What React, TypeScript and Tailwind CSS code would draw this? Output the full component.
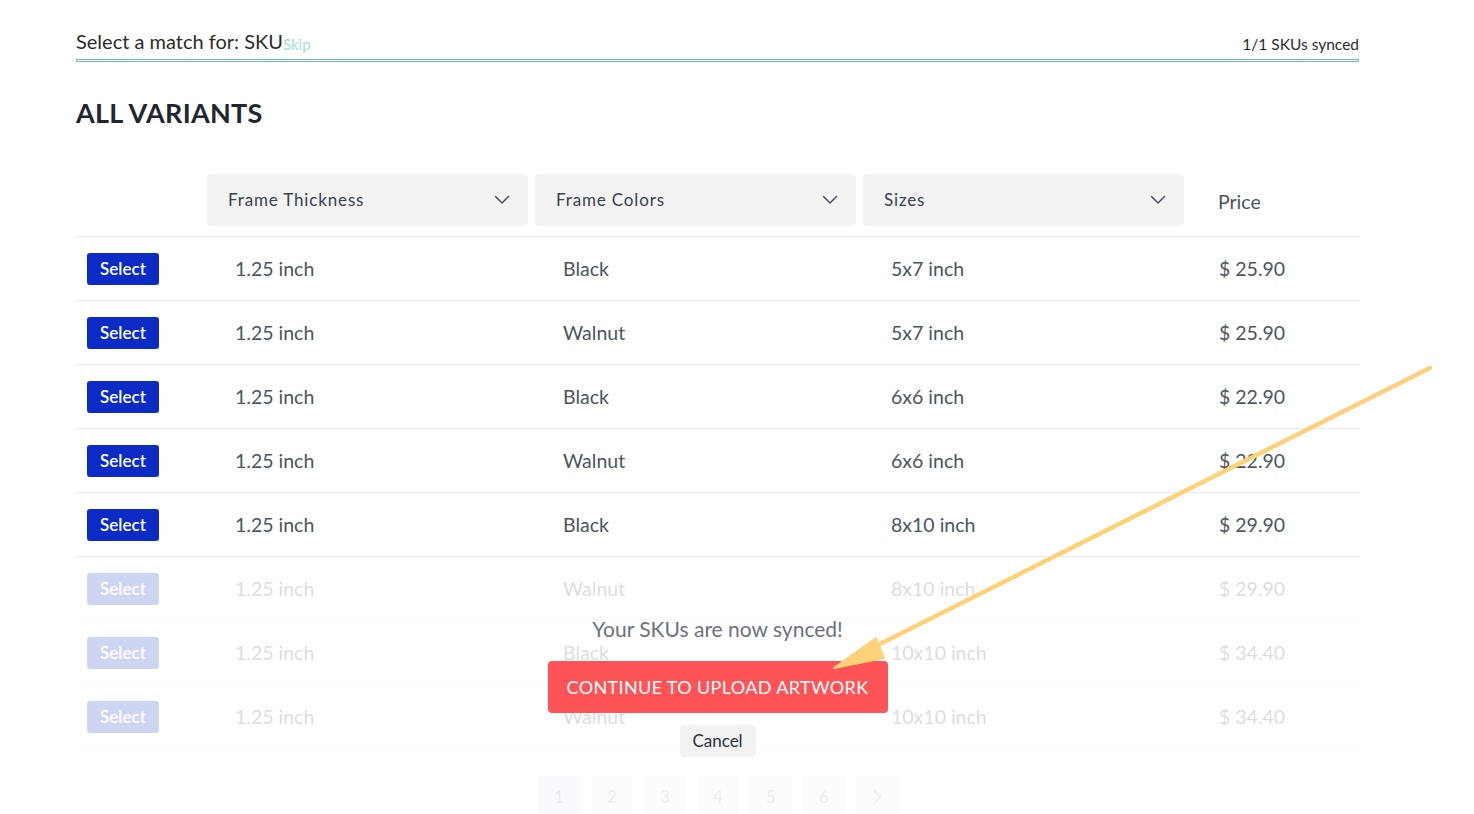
import React from "react";

const rows = [
  ["1.25 inch", "Black", "5x7 inch", "$ 25.90"],
  ["1.25 inch", "Walnut", "5x7 inch", "$ 25.90"],
  ["1.25 inch", "Black", "6x6 inch", "$ 22.90"],
  ["1.25 inch", "Walnut", "6x6 inch", "$ 22.90"],
  ["1.25 inch", "Black", "8x10 inch", "$ 29.90"],
  ["1.25 inch", "Walnut", "8x10 inch", "$ 29.90"],
  ["1.25 inch", "Black", "10x10 inch", "$ 34.40"],
  ["1.25 inch", "Walnut", "10x10 inch", "$ 34.40"],
];

function Chevron() {
  return (
    <svg width="16" height="10" viewBox="0 0 16 10" fill="none">
      <path d="M1.5 1.5L8 8L14.5 1.5" stroke="#4b5563" strokeWidth="1.6" strokeLinecap="round" strokeLinejoin="round" />
    </svg>
  );
}

function Dropdown({ label }: { label: string }) {
  return (
    <div className="flex h-[52px] w-[321px] items-center justify-between rounded-[4px] bg-[#f3f3f3] pl-[21px] pr-[18px]">
      <span className="text-[17px] tracking-[0.05em] text-[#374151]">{label}</span>
      <Chevron />
    </div>
  );
}

export default function App() {
  return (
    <div className="relative min-h-[814px] w-[1474px] overflow-hidden bg-white" style={{ fontFamily: "Lato, 'Noto Sans', sans-serif" }}>
      <div className="relative ml-[76px] w-[1283px]">
        <div className="flex items-end justify-between pt-[29px]">
          <div className="flex items-end">
            <span className="text-[20px] leading-[25px] text-[#2b2b2b]">Select a match for: SKU</span>
            <span className="text-[15px] leading-[20px] text-[#a6ded4]">Skip</span>
          </div>
          <span className="text-[15.5px] leading-[20px] text-[#2b2b2b]">1/1 SKUs synced</span>
        </div>
        <div className="mt-[5px] h-[3px] w-full border border-[#6cbfaa] bg-white" />

        <h1 className="mt-[35px] text-[27px] font-bold leading-[32px] tracking-[0.01em] text-[#1f2630]">ALL VARIANTS</h1>

        <div className="mt-[45px] flex items-center border-b border-[#ebebeb] pb-[10px]">
          <div className="w-[131px]" />
          <div className="flex gap-[7px]">
            <Dropdown label="Frame Thickness" />
            <Dropdown label="Frame Colors" />
            <Dropdown label="Sizes" />
          </div>
          <div className="pl-[34px] pt-[4px] text-[19.5px] text-[#4b5563]">Price</div>
        </div>

        {rows.map((r, i) => (
          <div key={i} className="flex h-[64px] items-center border-b border-[#ebebeb]">
            <div className="w-[131px] pl-[11px]">
              <div className="flex h-[32px] w-[72px] items-center justify-center rounded-[3px] bg-[#0a2bc4] text-[17px] font-semibold text-white">
                Select
              </div>
            </div>
            <div className="w-[328px] pl-[28px] text-[19.5px] text-[#4b5563]">{r[0]}</div>
            <div className="w-[328px] pl-[28px] text-[19.5px] text-[#4b5563]">{r[1]}</div>
            <div className="w-[328px] pl-[28px] text-[19.5px] text-[#4b5563]">{r[2]}</div>
            <div className="pl-[28px] text-[19.5px] text-[#4b5563]">{r[3]}</div>
          </div>
        ))}

        <div className="mt-[27px] flex justify-center gap-[11px] pl-[1px]">
          {["1", "2", "3", "4", "5", "6"].map((p, i) => (
            <div
              key={p}
              className={`flex h-[42px] w-[42px] items-center justify-center rounded-[3px] text-[17px] ${i === 0 ? "bg-[#dfe7fb] text-[#7f9ae0]" : "bg-[#f0f0f0] text-[#9ca3af]"}`}
            >
              {p}
            </div>
          ))}
          <div className="flex h-[42px] w-[42px] items-center justify-center rounded-[3px] bg-[#f0f0f0]">
            <svg width="10" height="16" viewBox="0 0 10 16" fill="none">
              <path d="M2 1.5L8.5 8L2 14.5" stroke="#9ca3af" strokeWidth="1.5" strokeLinecap="round" strokeLinejoin="round" />
            </svg>
          </div>
        </div>

        {/* fade overlay */}
        <div className="absolute left-0 right-0 top-[558px] h-[300px] bg-white/80" />

        {/* sync message */}
        <div className="absolute left-0 right-0 top-[615px] flex flex-col items-center">
          <div className="text-[21px] leading-[28px] text-[#6b7280]">Your SKUs are now synced!</div>
          <div className="mt-[18px] flex h-[52px] w-[340px] items-center justify-center rounded-[4px] bg-[#ff5457] text-[18px] tracking-[0.02em] text-white">
            CONTINUE TO UPLOAD ARTWORK
          </div>
          <div className="mt-[12px] flex h-[32px] w-[76px] items-center justify-center rounded-[4px] bg-[#f2f2f2] text-[17px] text-[#2b3340]">
            Cancel
          </div>
        </div>
      </div>

      {/* annotation arrow */}
      <svg className="pointer-events-none absolute left-0 top-0" width="1474" height="814" viewBox="0 0 1474 814">
        <line x1="1430" y1="368" x2="872" y2="648" stroke="#ffd27a" strokeWidth="4.5" strokeLinecap="round" />
        <polygon points="834,668 876,638 884,658" fill="#ffd27a" stroke="#ffd27a" strokeWidth="2" strokeLinejoin="round" />
      </svg>
    </div>
  );
}
